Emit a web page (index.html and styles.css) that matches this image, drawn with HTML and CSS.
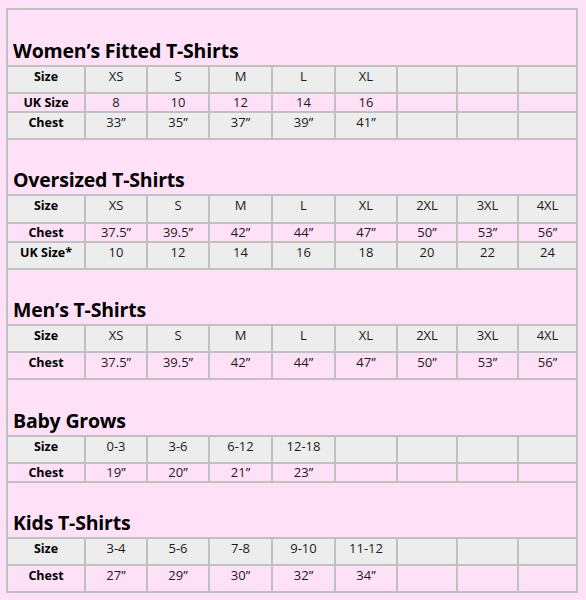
FILE: index.html
```html
<!DOCTYPE html>
<html>
<head>
<meta charset="utf-8">
<link rel="stylesheet" href="styles.css">
</head>
<body>
<div class="sheet">
  <div class="row title-row"><div class="cell title">Women’s Fitted T-Shirts</div></div>
  <div class="row tall grey">
    <div class="cell label">Size</div><div class="cell">XS</div><div class="cell">S</div><div class="cell">M</div><div class="cell">L</div><div class="cell">XL</div><div class="cell"></div><div class="cell"></div><div class="cell"></div>
  </div>
  <div class="row short pink">
    <div class="cell label">UK Size</div><div class="cell">8</div><div class="cell">10</div><div class="cell">12</div><div class="cell">14</div><div class="cell">16</div><div class="cell"></div><div class="cell"></div><div class="cell"></div>
  </div>
  <div class="row tall grey">
    <div class="cell label">Chest</div><div class="cell">33”</div><div class="cell">35”</div><div class="cell">37”</div><div class="cell">39”</div><div class="cell">41”</div><div class="cell"></div><div class="cell"></div><div class="cell"></div>
  </div>

  <div class="row title-row t56"><div class="cell title">Oversized T-Shirts</div></div>
  <div class="row tall28 grey">
    <div class="cell label">Size</div><div class="cell">XS</div><div class="cell">S</div><div class="cell">M</div><div class="cell">L</div><div class="cell">XL</div><div class="cell">2XL</div><div class="cell">3XL</div><div class="cell">4XL</div>
  </div>
  <div class="row short pink">
    <div class="cell label">Chest</div><div class="cell">37.5”</div><div class="cell">39.5”</div><div class="cell">42”</div><div class="cell">44”</div><div class="cell">47”</div><div class="cell">50”</div><div class="cell">53”</div><div class="cell">56”</div>
  </div>
  <div class="row tall grey">
    <div class="cell label">UK Size*</div><div class="cell">10</div><div class="cell">12</div><div class="cell">14</div><div class="cell">16</div><div class="cell">18</div><div class="cell">20</div><div class="cell">22</div><div class="cell">24</div>
  </div>

  <div class="row title-row t56"><div class="cell title">Men’s T-Shirts</div></div>
  <div class="row tall grey">
    <div class="cell label">Size</div><div class="cell">XS</div><div class="cell">S</div><div class="cell">M</div><div class="cell">L</div><div class="cell">XL</div><div class="cell">2XL</div><div class="cell">3XL</div><div class="cell">4XL</div>
  </div>
  <div class="row tall pink">
    <div class="cell label">Chest</div><div class="cell">37.5”</div><div class="cell">39.5”</div><div class="cell">42”</div><div class="cell">44”</div><div class="cell">47”</div><div class="cell">50”</div><div class="cell">53”</div><div class="cell">56”</div>
  </div>

  <div class="row title-row"><div class="cell title">Baby Grows</div></div>
  <div class="row tall grey">
    <div class="cell label">Size</div><div class="cell">0-3</div><div class="cell">3-6</div><div class="cell">6-12</div><div class="cell">12-18</div><div class="cell"></div><div class="cell"></div><div class="cell"></div><div class="cell"></div>
  </div>
  <div class="row short pink">
    <div class="cell label">Chest</div><div class="cell">19”</div><div class="cell">20”</div><div class="cell">21”</div><div class="cell">23”</div><div class="cell"></div><div class="cell"></div><div class="cell"></div><div class="cell"></div>
  </div>

  <div class="row title-row t56"><div class="cell title">Kids T-Shirts</div></div>
  <div class="row tall grey">
    <div class="cell label">Size</div><div class="cell">3-4</div><div class="cell">5-6</div><div class="cell">7-8</div><div class="cell">9-10</div><div class="cell">11-12</div><div class="cell"></div><div class="cell"></div><div class="cell"></div>
  </div>
  <div class="row tall pink">
    <div class="cell label">Chest</div><div class="cell">27”</div><div class="cell">29”</div><div class="cell">30”</div><div class="cell">32”</div><div class="cell">34”</div><div class="cell"></div><div class="cell"></div><div class="cell"></div>
  </div>
</div>
</body>
</html>
```

FILE: styles.css
```css
html, body {
  margin: 0;
  padding: 0;
  background: #ffe1f7;
}
body {
  padding: 8px 0 0 6px;
  font-family: "Open Sans", Lato, "Liberation Sans", sans-serif;
  color: #1a1a1a;
}
.sheet {
  width: 572px;
  box-sizing: border-box;
  border-left: 2px solid #c0c0c0;
  border-top: 2px solid #c0c0c0;
}
.row {
  display: grid;
  grid-template-columns: 78px 62px 62px 63px 63px 62px 60px 61px 59px;
}
.title-row {
  display: block;
  height: 57px;
}
.title-row.t56 { height: 56px; }
.cell {
  box-sizing: border-box;
  border-right: 2px solid #c0c0c0;
  border-bottom: 2px solid #c0c0c0;
  text-align: center;
  font-size: 13px;
  line-height: 17px;
  padding-top: 1px;
}
.title {
  height: 100%;
  display: flex;
  align-items: flex-end;
  text-align: left;
  padding: 0 0 2px 5px;
  font-size: 19.5px;
  line-height: 24px;
  font-weight: 700;
  color: #000;
  letter-spacing: -0.2px;
}
.tall .cell { height: 27px; }
.tall28 .cell { height: 28px; }
.short .cell { height: 19px; padding-top: 0; }
.grey .cell { background: #ededed; }
.pink .cell { background: #ffe1f7; }
.label {
  font-weight: 700;
  font-size: 12.5px;
  color: #000;
}
```
